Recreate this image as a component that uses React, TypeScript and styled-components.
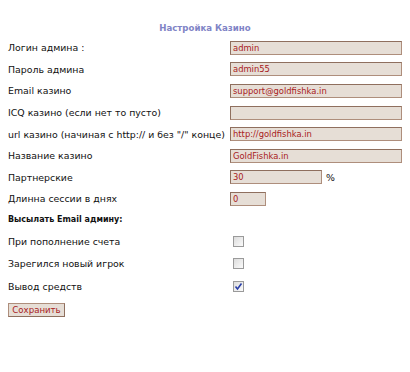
import React from 'react';
import styled, { createGlobalStyle } from 'styled-components';

const GlobalStyle = createGlobalStyle`
  body {
    margin: 8px;
    background: #ffffff;
    font-family: "DejaVu Sans", Verdana, sans-serif;
    color: #111;
  }
`;

const fields = [
  { label: 'Логин админа :', value: 'admin', width: 172 },
  { label: 'Пароль админа', value: 'admin55', width: 172 },
  { label: 'Email казино', value: 'support@goldfishka.in', width: 172 },
  { label: 'ICQ казино (если нет то пусто)', value: '', width: 172 },
  { label: 'url казино (начиная с http:// и без "/" конце)', value: 'http://goldfishka.in', width: 172 },
  { label: 'Название казино', value: 'GoldFishka.in', width: 172 },
  { label: 'Партнерские', value: '30', width: 92, suffix: '%' },
  { label: 'Длинна сессии в днях', value: '0', width: 36 },
];

const checks = [
  { label: 'При пополнение счета', checked: false },
  { label: 'Зарегился новый игрок', checked: false },
  { label: 'Вывод средств', checked: true },
];

function Settings() {
  return (
    <Wrap>
      <Title>Настройка Казино</Title>
      <Form>
        {fields.map((f) => (
          <Row key={f.label} $h={21.6}>
            <Label>{f.label}</Label>
            <Cell>
              <TextInput $w={f.width} defaultValue={f.value} />
              {f.suffix && <Suffix>{f.suffix}</Suffix>}
            </Cell>
          </Row>
        ))}
        <Row $h={20}>
          <Bold>Высылать Email админу:</Bold>
        </Row>
        {checks.map((c) => (
          <Row key={c.label} $h={22.8}>
            <Label>{c.label}</Label>
            <Cell>
              <Box $checked={c.checked}>
                {c.checked && (
                  <svg width="9" height="9" viewBox="0 0 9 9">
                    <path d="M1.5 4.5 L3.5 7 L7.5 1.5" fill="none" stroke="#2a3fa8" strokeWidth="1.6" />
                  </svg>
                )}
              </Box>
            </Cell>
          </Row>
        ))}
      </Form>
      <SaveButton>Сохранить</SaveButton>
    </Wrap>
  );
}

const Wrap = styled.div`
  width: 394px;
`;

const Title = styled.div`
  text-align: center;
  font-weight: bold;
  font-size: 8.6px;
  color: #7f84c6;
  padding-top: 15px;
  height: 14px;
  line-height: 10px;
`;

const Form = styled.div`
  display: flex;
  flex-direction: column;
`;

const Row = styled.div<{ $h: number }>`
  display: grid;
  grid-template-columns: 222px 1fr;
  align-items: center;
  height: ${(p) => p.$h}px;
`;

const Label = styled.div`
  font-size: 9.4px;
  white-space: nowrap;
  color: #111;
`;

const Bold = styled.div`
  font-size: 8px;
  font-weight: bold;
  white-space: nowrap;
`;

const Cell = styled.div`
  display: flex;
  align-items: center;
  gap: 4px;
`;

const TextInput = styled.input<{ $w: number }>`
  box-sizing: border-box;
  width: ${(p) => p.$w}px;
  height: 14px;
  padding: 0 2px;
  margin: 0;
  background: #e6ded6;
  border: 1px solid #ae8e7c;
  border-top-color: #8f6f5e;
  border-left-color: #8f6f5e;
  color: #a8201c;
  font-family: "DejaVu Sans", Tahoma, sans-serif;
  font-size: 8.4px;
  outline: none;
`;

const Suffix = styled.span`
  font-size: 9.4px;
`;

const Box = styled.span<{ $checked: boolean }>`
  box-sizing: border-box;
  width: 11px;
  height: 11px;
  margin-left: 3px;
  border: 1px solid #9a9a9a;
  background: linear-gradient(135deg, #dcdcdc, #fbfbfb);
  display: flex;
  align-items: center;
  justify-content: center;
`;

const SaveButton = styled.button`
  margin-top: 5px;
  box-sizing: border-box;
  width: 57px;
  height: 14px;
  padding: 0;
  background: #e6ded6;
  border: 1px solid #ae8e7c;
  border-bottom-color: #8f6f5e;
  border-right-color: #8f6f5e;
  color: #a8201c;
  font-family: "DejaVu Sans", Tahoma, sans-serif;
  font-size: 8.6px;
  line-height: 12px;
`;

export default function App() {
  return (
    <>
      <GlobalStyle />
      <Settings />
    </>
  );
}
